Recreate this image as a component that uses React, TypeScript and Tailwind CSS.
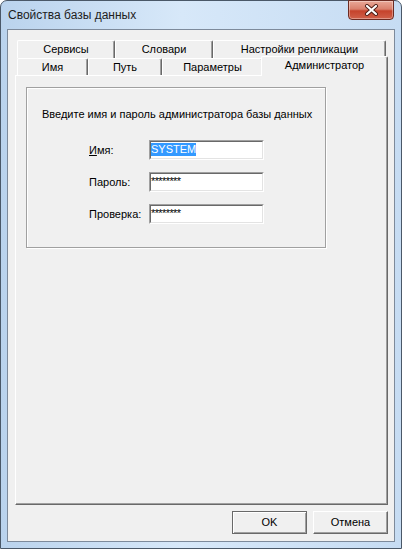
import React from 'react'

const bevelUp =
  'border-t border-l border-t-white border-l-white border-r border-b border-r-[#696969] border-b-[#696969] shadow-[inset_-1px_-1px_0_#a0a0a0]'

function Tab({ label, width, selected }: { label: string; width: number; selected?: boolean }) {
  if (selected) {
    return (
      <div
        className="relative z-10 -mt-[2px] -ml-[2px] -mr-[2px] flex h-[20px] items-center justify-center rounded-t-[2px] border-t border-l border-r border-t-white border-l-white border-r-[#696969] bg-[#f0f0f0] pb-[2px] shadow-[inset_-1px_0_0_#a0a0a0]"
        style={{ width }}
      >
        {label}
      </div>
    )
  }
  return (
    <div
      className="flex h-full items-center justify-center rounded-t-[2px] border-t border-l border-r border-t-white border-l-white border-r-[#696969] bg-[#f0f0f0] shadow-[inset_-1px_0_0_#a0a0a0]"
      style={{ width }}
    >
      {label}
    </div>
  )
}

function Field({ children }: { children: React.ReactNode }) {
  return (
    <div className="h-[20px] w-[115px] border-t border-l border-t-[#a0a0a0] border-l-[#a0a0a0] border-r border-b border-r-white border-b-white">
      <div className="h-full w-full border-t border-l border-t-[#696969] border-l-[#696969] border-r border-b border-r-[#e3e3e3] border-b-[#e3e3e3] bg-white pt-[1px]">
        {children}
      </div>
    </div>
  )
}

export default function App() {
  return (
    <div className="flex h-[549px] w-[402px] flex-col rounded-t-[7px] border border-[#4a5868] bg-[linear-gradient(90deg,#bad3ed_0%,#d7e8f9_45%,#c6dcf3_100%)] font-['Liberation_Sans',Arial,sans-serif] text-[11px] leading-[13px] text-black">
      {/* title bar */}
      <div className="flex h-[28px] items-start justify-between pr-[7px]">
        <div className="pl-[7px] pt-[7px] text-[12px] leading-[15px] text-[#1e1e1e]">Свойства базы данных</div>
        <div className="-mt-px flex h-[20px] w-[46px] items-center justify-center rounded-b-[4px] border border-[#6c2b22] bg-[linear-gradient(180deg,#e9a898_0%,#d9806c_45%,#c5432c_55%,#d0604a_100%)] shadow-[inset_0_0_0_1px_rgba(255,255,255,0.35)]">
          <svg width="15" height="12" viewBox="0 0 15 12">
            <path d="M3 2 L12 10 M12 2 L3 10" stroke="#4a1b14" strokeWidth="4" strokeLinecap="round" />
            <path d="M3 2 L12 10 M12 2 L3 10" stroke="#ffffff" strokeWidth="2.2" strokeLinecap="round" />
          </svg>
        </div>
      </div>

      {/* client area */}
      <div className="mx-[6px] h-[513px] border border-[#7d8a9b] bg-[#f0f0f0] px-[7px] pt-[10px]">
        <div className="pl-[2px]">
          <div className="flex h-[18px]">
            <Tab label="Сервисы" width={98} />
            <Tab label="Словари" width={98} />
            <Tab label="Настройки репликации" width={173} />
          </div>
          <div className="flex h-[17px] items-start">
            <Tab label="Имя" width={71} />
            <Tab label="Путь" width={74} />
            <Tab label="Параметры" width={101} />
            <Tab label="Администратор" width={127} selected />
          </div>
        </div>

        <div className={`h-[430px] w-[373px] ${bevelUp} pl-[10px] pt-[11px]`}>
          <div className="h-[161px] w-[300px] border border-[#a0a0a0] pl-[15px] pt-[20px] shadow-[1px_1px_0_#ffffff,inset_1px_1px_0_#ffffff]">
            <div>Введите имя и пароль администратора базы данных</div>
            <div className="mt-[19px] flex flex-col gap-[12px] pl-[47px]">
              <div className="flex items-center">
                <div className="w-[60px]">
                  <span className="underline">И</span>мя:
                </div>
                <Field>
                  <span className="inline-block h-[13px] bg-[#3399ff] text-white">SYSTEM</span>
                </Field>
              </div>
              <div className="flex items-center">
                <div className="w-[60px]">Пароль:</div>
                <Field>
                  <span className="tracking-[-0.6px]">********</span>
                </Field>
              </div>
              <div className="flex items-center">
                <div className="w-[60px]">Проверка:</div>
                <Field>
                  <span className="tracking-[-0.6px]">********</span>
                </Field>
              </div>
            </div>
          </div>
        </div>

        <div className="mt-[6px] flex w-[373px] justify-end gap-[6px]">
          <button className="h-[23px] w-[75px] border border-[#696969] bg-[#f0f0f0] shadow-[inset_1px_1px_0_#ffffff,inset_-1px_-1px_0_#a0a0a0]">
            OK
          </button>
          <button className={`h-[23px] w-[75px] bg-[#f0f0f0] ${bevelUp}`}>Отмена</button>
        </div>
      </div>
    </div>
  )
}
